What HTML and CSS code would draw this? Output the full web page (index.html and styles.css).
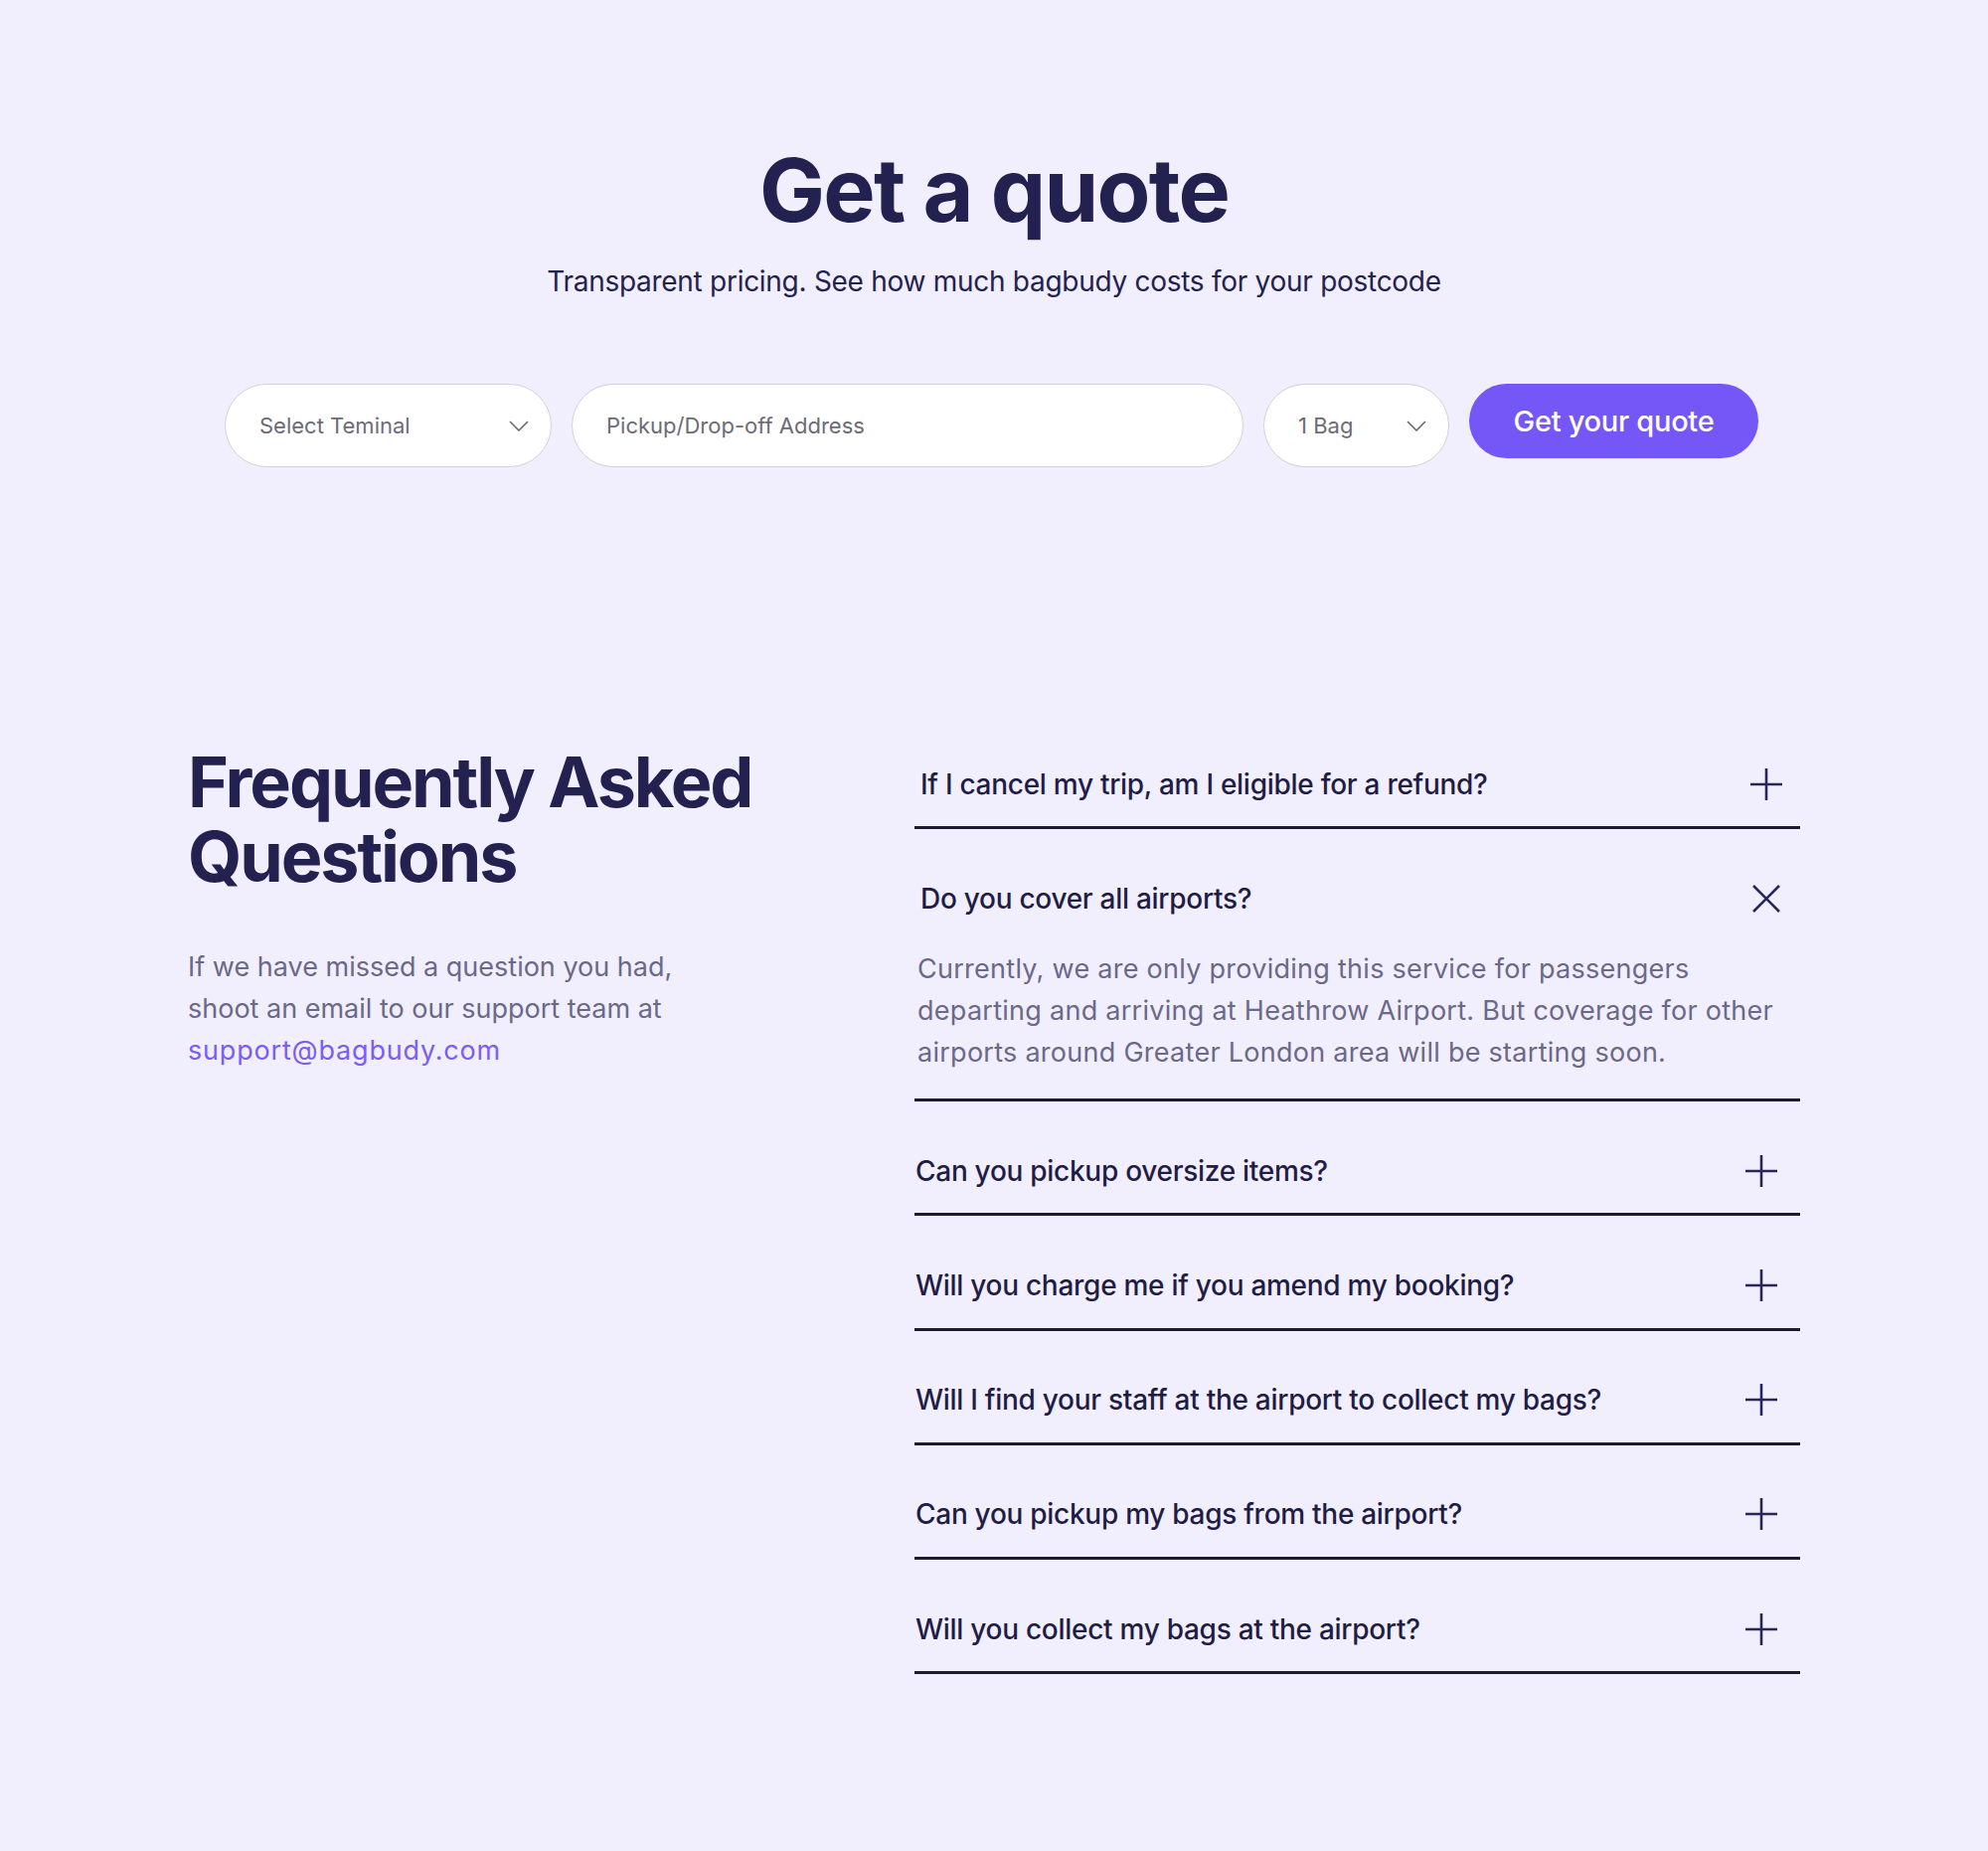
FILE: index.html
```html
<html><head>
  <title>Get a quote - bagbudy</title>
  <link rel="stylesheet" href="styles.css">
</head>
<body>

<section class="quote">
  <h1 class="quote-title">Get a quote</h1>
  <p class="quote-sub">Transparent pricing. See how much bagbudy costs for your postcode</p>

  <form class="quote-form">
    <div class="field field-terminal">
      <span>Select Teminal</span>
      <svg class="chev" width="20" height="11" viewBox="0 0 20 11"><path d="M1 1 L10 10 L19 1" fill="none" stroke="#6a6873" stroke-width="1.6"/></svg>
    </div>
    <input class="field field-address" type="text" placeholder="Pickup/Drop-off Address">
    <div class="field field-bags">
      <span>1 Bag</span>
      <svg class="chev" width="20" height="11" viewBox="0 0 20 11"><path d="M1 1 L10 10 L19 1" fill="none" stroke="#6a6873" stroke-width="1.6"/></svg>
    </div>
    <button type="button" class="quote-btn">Get your quote</button>
  </form>
</section>

<section class="faq">
  <div class="faq-intro">
    <h2 class="faq-title">Frequently Asked Questions</h2>
    <p class="faq-text">If we have missed a question you had, shoot an email to our support team at <a href="#">support@bagbudy.com</a></p>
  </div>

  <div class="faq-list">
    <div class="faq-item shifted">
      <div class="faq-q">
        <span>If I cancel my trip, am I eligible for a refund?</span>
        <svg class="icon" width="32" height="32" viewBox="0 0 32 32"><path d="M16 0 V32 M0 16 H32" stroke="#27255a" stroke-width="2.6"/></svg>
      </div>
    </div>
    <div class="faq-item shifted open">
      <div class="faq-q">
        <span>Do you cover all airports?</span>
        <svg class="icon" width="32" height="32" viewBox="0 0 32 32"><path d="M3 3 L29 29 M29 3 L3 29" stroke="#27255a" stroke-width="2.6"/></svg>
      </div>
      <p class="faq-a">Currently, we are only providing this service for passengers departing and arriving at Heathrow Airport. But coverage for other airports around Greater London area will be starting soon.</p>
    </div>
    <div class="faq-item">
      <div class="faq-q">
        <span>Can you pickup oversize items?</span>
        <svg class="icon" width="32" height="32" viewBox="0 0 32 32"><path d="M16 0 V32 M0 16 H32" stroke="#27255a" stroke-width="2.6"/></svg>
      </div>
    </div>
    <div class="faq-item">
      <div class="faq-q">
        <span>Will you charge me if you amend my booking?</span>
        <svg class="icon" width="32" height="32" viewBox="0 0 32 32"><path d="M16 0 V32 M0 16 H32" stroke="#27255a" stroke-width="2.6"/></svg>
      </div>
    </div>
    <div class="faq-item">
      <div class="faq-q">
        <span>Will I find your staff at the airport to collect my bags?</span>
        <svg class="icon" width="32" height="32" viewBox="0 0 32 32"><path d="M16 0 V32 M0 16 H32" stroke="#27255a" stroke-width="2.6"/></svg>
      </div>
    </div>
    <div class="faq-item">
      <div class="faq-q">
        <span>Can you pickup my bags from the airport?</span>
        <svg class="icon" width="32" height="32" viewBox="0 0 32 32"><path d="M16 0 V32 M0 16 H32" stroke="#27255a" stroke-width="2.6"/></svg>
      </div>
    </div>
    <div class="faq-item">
      <div class="faq-q">
        <span>Will you collect my bags at the airport?</span>
        <svg class="icon" width="32" height="32" viewBox="0 0 32 32"><path d="M16 0 V32 M0 16 H32" stroke="#27255a" stroke-width="2.6"/></svg>
      </div>
    </div>
  </div>
</section>

</body></html>
```

FILE: styles.css
```css
    body {
      margin: 0;
      background-color: #f1effd;
      font-family: "Inter", "Liberation Sans", sans-serif;
      color: #23214f;
      min-height: 1862px;
    }

    /* Sezione preventivo */
    .quote {
      padding-top: 143px;
      text-align: center;
    }

    .quote-title {
      margin: 0;
      font-size: 88px;
      line-height: 97px;
      font-weight: 700;
      letter-spacing: -0.02em;
      color: #23214f;
    }

    .quote-sub {
      margin: 24px 0 0;
      font-size: 28px;
      line-height: 39px;
      letter-spacing: -0.01em;
      color: #23214f;
    }

    .quote-form {
      margin: 83px 0 0;
      padding-right: 5px;
      display: flex;
      justify-content: center;
      align-items: flex-start;
      gap: 20px;
    }

    .field {
      box-sizing: border-box;
      height: 84px;
      background-color: #fff;
      border: 1.5px solid #d3d1dc;
      border-radius: 42px;
      padding: 0 22px 0 34px;
      display: flex;
      align-items: center;
      justify-content: space-between;
      font-family: inherit;
      font-size: 22px;
      color: #6d6b76;
      text-align: left;
    }

    .field-terminal { width: 329px; }
    .field-address { width: 676px; outline: none; }
    .field-bags { width: 187px; }

    .field-address::placeholder {
      color: #6d6b76;
    }

    .quote-btn {
      width: 291px;
      height: 75px;
      border: none;
      border-radius: 38px;
      background-color: #7457f6;
      color: #fff;
      font-family: inherit;
      font-size: 29px;
      font-weight: 500;
      letter-spacing: -0.01em;
      cursor: pointer;
    }

    /* Sezione FAQ */
    .faq {
      width: 1622px;
      margin: 248px auto 0;
      display: grid;
      grid-template-columns: 1fr 891px;
      align-items: start;
    }

    .faq-intro {
      padding-top: 31px;
    }

    .faq-title {
      margin: 0;
      font-size: 70px;
      line-height: 75px;
      font-weight: 700;
      letter-spacing: -0.03em;
      color: #23214f;
    }

    .faq-text {
      margin: 53px 0 0;
      width: 520px;
      font-size: 27px;
      line-height: 42px;
      color: #6b6889;
    }

    .faq-text a {
      color: #7b5cf5;
      text-decoration: none;
      letter-spacing: 0.03em;
    }

    .faq-item {
      padding: 52.5px 0 24.75px;
      border-bottom: 3px solid #1c1b30;
    }

    .faq-item + .faq-item {
      padding-top: 51.5px;
    }

    .faq-q {
      display: flex;
      align-items: center;
      justify-content: space-between;
      padding: 0 23px 0 1px;
      font-size: 28px;
      line-height: 36px;
      font-weight: 500;
      letter-spacing: -0.01em;
      color: #1f1d45;
    }

    .faq-item.shifted .faq-q {
      padding: 0 18px 0 6px;
    }

    .faq-q .icon {
      flex: none;
    }

    .faq-a {
      margin: 32.5px 0 0;
      padding-left: 3px;
      max-width: 870px;
      font-size: 27px;
      line-height: 42px;
      letter-spacing: 0.01em;
      color: #6b6889;
    }
```
